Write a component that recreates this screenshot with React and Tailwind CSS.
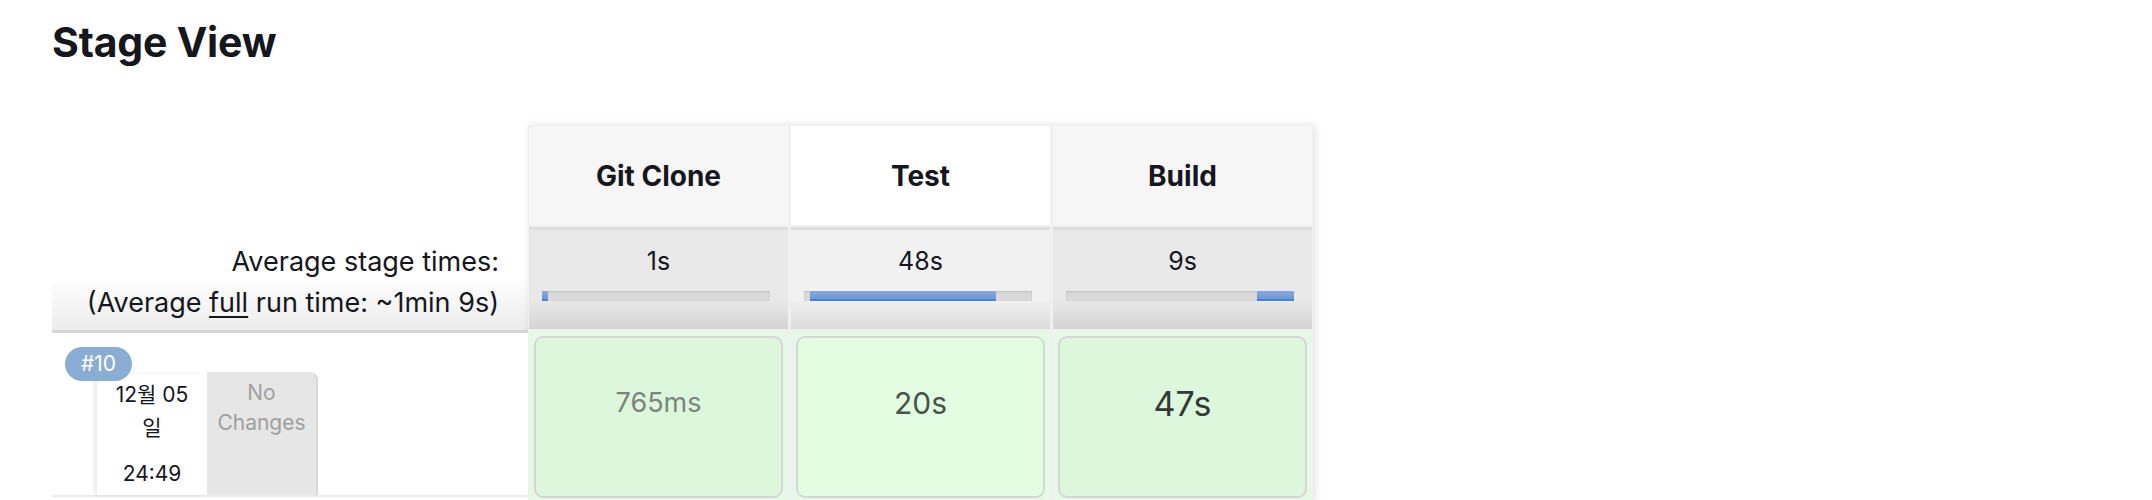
const stages = [
  { name: 'Git Clone', avg: '1s', head: 'bg-[#f6f6f7]', avgBg: 'from-[#e9e9e9] to-[#d4d4d4]', barStart: 0, barWidth: 2.5, cell: 'bg-[#ddf7dd]', time: '765ms', timeCls: 'text-[27px] text-[#7b857b]' },
  { name: 'Test', avg: '48s', head: 'bg-white', avgBg: 'from-[#f1f1f1] to-[#dcdcdc]', barStart: 2.5, barWidth: 81.5, cell: 'bg-[#e3fde3]', time: '20s', timeCls: 'text-[30px] text-[#4a524a]' },
  { name: 'Build', avg: '9s', head: 'bg-[#f6f6f7]', avgBg: 'from-[#e9e9e9] to-[#d4d4d4]', barStart: 83.8, barWidth: 16.2, cell: 'bg-[#ddf7dd]', time: '47s', timeCls: 'text-[34px] text-[#333a33]' },
]

function Bar({ start, width }) {
  return (
    <div className="relative ml-[13px] h-[10px] w-[228px] bg-[#d9d9d9] shadow-[inset_0_1px_2px_rgba(0,0,0,0.12)]">
      <div
        className="absolute top-0 h-[10px] bg-gradient-to-b from-[#86a9dc] to-[#6d97d8] border-b-2 border-[#4d82d3]"
        style={{ left: `${start}%`, width: `${width}%` }}
      />
    </div>
  )
}

export default function App() {
  return (
    <div className="w-full h-[500px] overflow-hidden bg-white text-[#16161d]" style={{ fontFamily: 'Inter, "Noto Sans CJK KR", sans-serif' }}>
      <div className="pl-[52px] pt-[17px]">
        <h2 className="text-[41px] leading-[50px] font-bold tracking-[-0.2px]">Stage View</h2>

        <div className="mt-[58px] flex">
          {/* left column */}
          <div className="w-[476px] flex flex-col">
            <div className="h-[101px]" />
            <div className="h-[104px] bg-gradient-to-b from-white via-white to-[#ececec] flex flex-col items-end justify-center pr-[29px] text-[27px] leading-[41px] pt-[8px]">
              <div>Average stage times:</div>
              <div>(Average <span className="underline underline-offset-4">full</span> run time: ~1min 9s)</div>
            </div>
            <div className="h-[170px] border-t-[3px] border-[#d6d6d6] bg-white relative">
              <div className="absolute left-[13px] top-[14px] z-10 h-[34px] px-[16px] rounded-full bg-[#8aadd4] text-white text-[21px] leading-[34px]">#10</div>
              <div className="flex pl-[45px] pt-[41px] h-[164px] border-b-2 border-[#ebebeb]">
                <div className="w-[110px] bg-white shadow-[-3px_0_4px_rgba(0,0,0,0.08)] flex flex-col items-center text-[21px] pt-[4px]">
                  <div className="text-center leading-[33px] w-[82px]">12월 05 일</div>
                  <div className="mt-[13px] leading-[33px]">24:49</div>
                </div>
                <div className="w-[111px] -mt-[2px] bg-[#e6e6e6] rounded-tr-[8px] border-r-2 border-[#d8d8d8] text-[#a0a0a0] text-[21px] leading-[30px] text-center pt-[6px]">
                  No<br />Changes
                </div>
              </div>
            </div>
          </div>

          {/* stage columns */}
          <div className="flex gap-[3px] bg-[#f0f0f2] p-[1px] shadow-[2px_0_8px_rgba(0,0,0,0.12)]">
            {stages.map((s) => (
              <div key={s.name} className="w-[259px] flex flex-col gap-[2px]">
                <div className={`h-[99px] ${s.head} flex items-center justify-center text-[28px] font-bold`}>{s.name}</div>
                <div className={`h-[102px] bg-gradient-to-b ${s.avgBg} from-70% flex flex-col pt-[14px] border-t-[3px] border-[#dedede]`}>
                  <div className="text-[25px] leading-[34px] text-center">{s.avg}</div>
                  <div className="mt-[13px] w-full"><Bar start={s.barStart} width={s.barWidth} /></div>
                </div>
                <div className="h-[170px] bg-[#e6f9e6] p-[5px]">
                  <div className={`h-[162px] rounded-[9px] border-2 border-[#d6d6d6] ${s.cell} flex items-center justify-center pb-[27px]`}>
                    <span className={s.timeCls}>{s.time}</span>
                  </div>
                </div>
              </div>
            ))}
          </div>
        </div>
      </div>
    </div>
  )
}
